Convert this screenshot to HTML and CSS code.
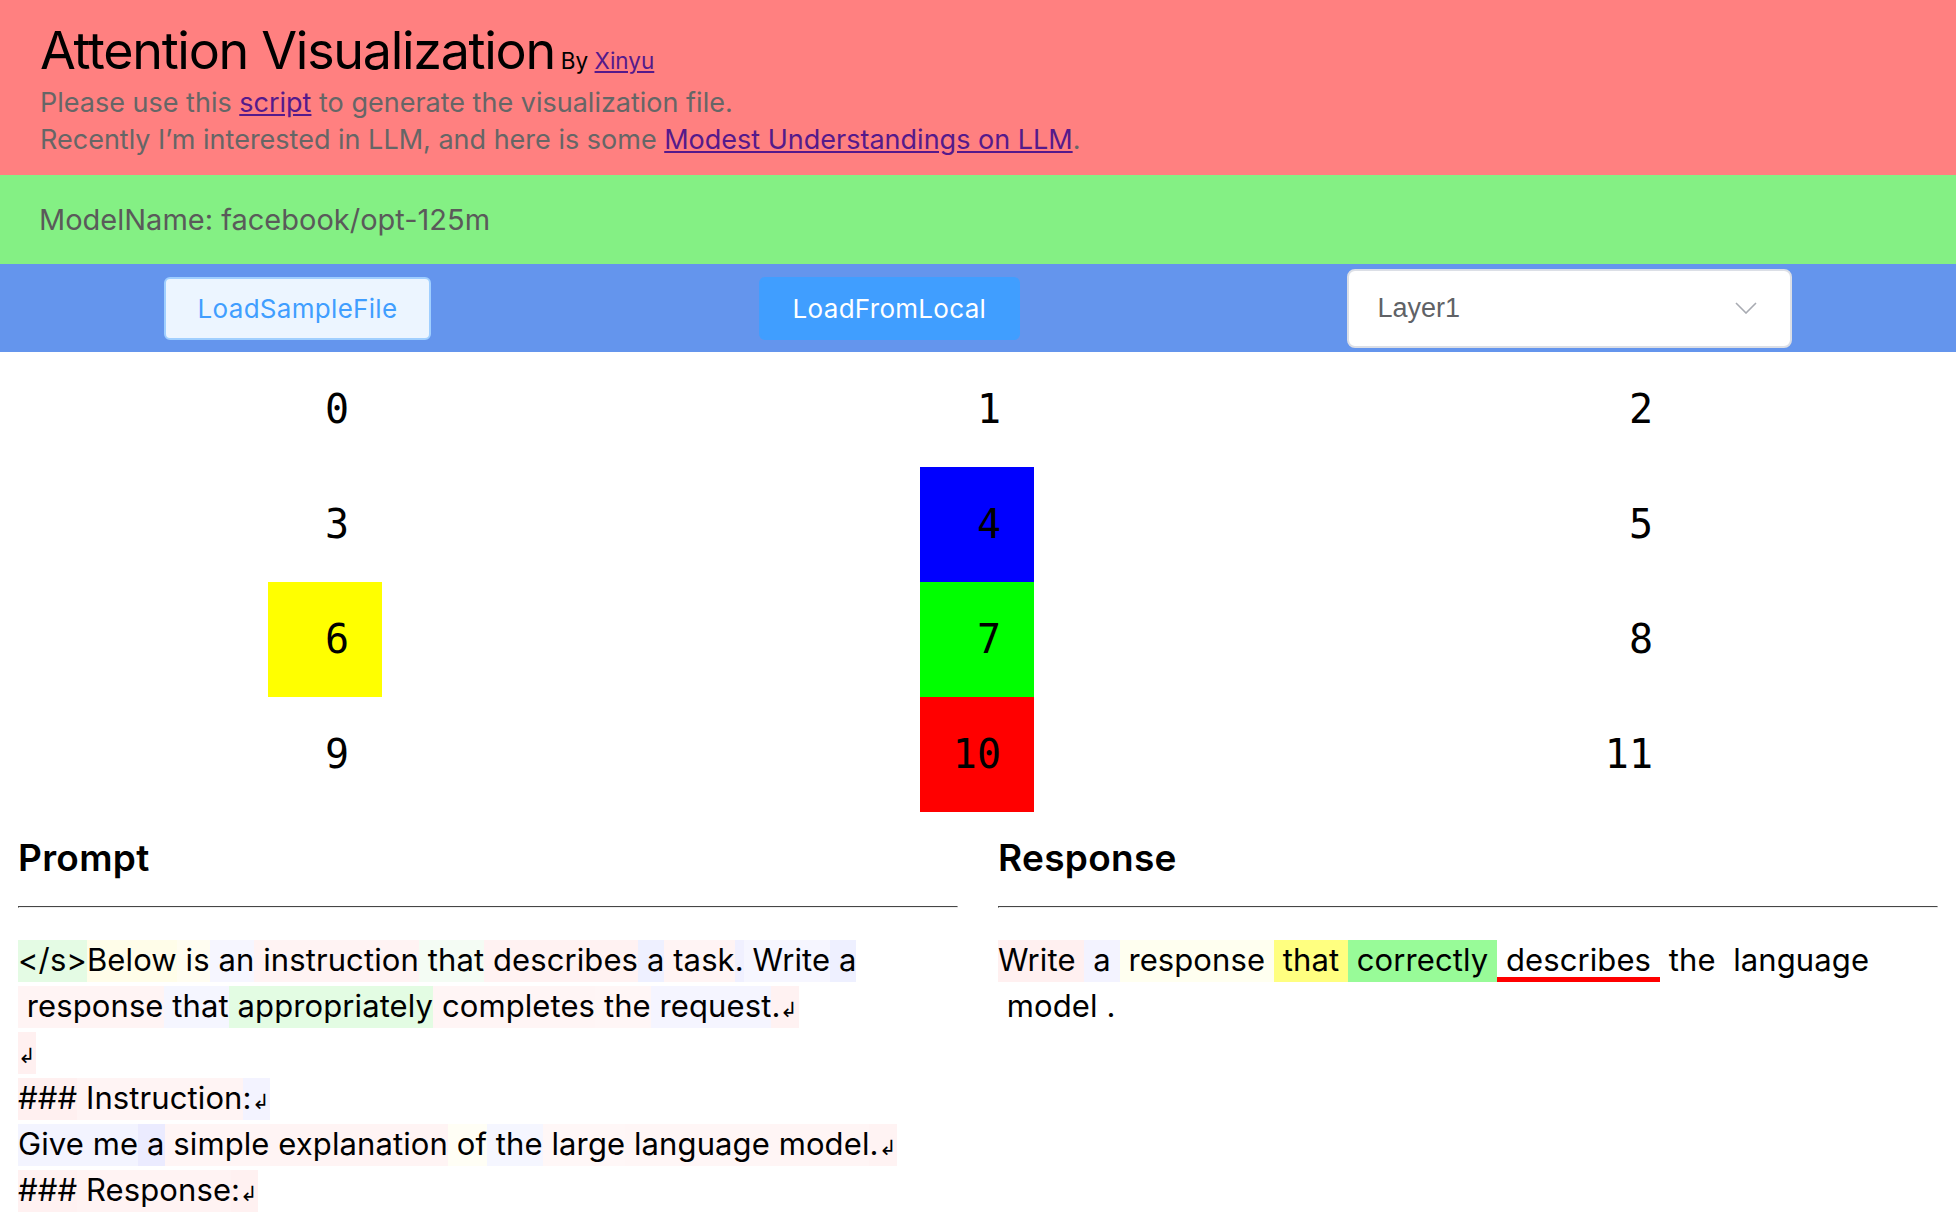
FILE: index.html
```html
<!DOCTYPE html>
<html lang="en">
<head>
<meta charset="utf-8">
<title>Attention Visualization</title>
<link rel="stylesheet" href="styles.css">
</head>
<body>
<header class="top">
  <div class="title-row"><span class="title">Attention Visualization</span><span class="by">By <a href="#">Xinyu</a></span></div>
  <p class="desc desc-first">Please use this <a href="#">script</a> to generate the visualization file.</p>
  <p class="desc">Recently I’m interested in LLM, and here is some <a href="#">Modest Understandings on LLM</a>.</p>
</header>
<div class="model-bar">ModelName: facebook/opt-125m</div>
<div class="tool-bar">
  <button class="btn btn-plain">LoadSampleFile</button>
  <button class="btn btn-primary">LoadFromLocal</button>
  <div class="select">
    <span class="select-text">Layer1</span>
    <svg class="chev" width="22" height="12" viewBox="0 0 22 12"><path d="M1 1 L11 11 L21 1" fill="none" stroke="#a8abb2" stroke-width="1.6"/></svg>
  </div>
</div>
<div class="heads">
  <div class="head-cell"><span class="head">0</span></div>
  <div class="head-cell"><span class="head">1</span></div>
  <div class="head-cell"><span class="head">2</span></div>
  <div class="head-cell"><span class="head">3</span></div>
  <div class="head-cell"><span class="head" style="background:#0000ff">4</span></div>
  <div class="head-cell"><span class="head">5</span></div>
  <div class="head-cell"><span class="head" style="background:#ffff00">6</span></div>
  <div class="head-cell"><span class="head" style="background:#00ff00">7</span></div>
  <div class="head-cell"><span class="head">8</span></div>
  <div class="head-cell"><span class="head">9</span></div>
  <div class="head-cell"><span class="head" style="background:#ff0000">10</span></div>
  <div class="head-cell"><span class="head">11</span></div>
</div>
<main class="texts">
  <section class="col">
    <h2 class="col-title">Prompt</h2>
    <hr class="rule">
    <div class="tokens"><span class="tok" style="background:#e4fbe4">&lt;/s&gt;</span><span class="tok" style="background:#fffde9">Below</span><span class="tok" style="background:#fffdf1"> is</span><span class="tok" style="background:#f6f6ff"> an</span><span class="tok" style="background:#fff3f3"> instruction</span><span class="tok" style="background:#f4fcf4"> that</span><span class="tok" style="background:#fff2f2"> describes</span><span class="tok" style="background:#eef0ff"> a</span><span class="tok" style="background:#fff4f4"> task</span><span class="tok" style="background:#f0f0ff">.</span><span class="tok" style="background:#f6f6ff"> Write</span><span class="tok" style="background:#eef0ff"> a</span><span class="tok" style="background:#fff4f4"> response</span><span class="tok" style="background:#f5f6ff"> that</span><span class="tok" style="background:#e3fce3"> appropriately</span><span class="tok" style="background:#fff5f5"> completes</span><span class="tok" style="background:#fff6f6"> the</span><span class="tok" style="background:#f5f5ff"> request</span><span class="tok" style="background:#fff2f2">.<span class="nl">↲</span></span><br><span class="tok" style="background:#fff0f0"><span class="nl">↲</span></span><br><span class="tok" style="background:#fff0f0">###</span><span class="tok" style="background:#fff4f4"> Instruction</span><span class="tok" style="background:#f3f3ff">:<span class="nl">↲</span></span><br><span class="tok" style="background:#f3f4ff">Give</span><span class="tok" style="background:#f3f4ff"> me</span><span class="tok" style="background:#ebebff"> a</span><span class="tok" style="background:#fff5f5"> simple</span><span class="tok" style="background:#fff4f4"> explanation</span><span class="tok" style="background:#fffef5"> of</span><span class="tok" style="background:#f5f6ff"> the</span><span class="tok" style="background:#fff7f7"> large</span><span class="tok" style="background:#fff6f6"> language</span><span class="tok" style="background:#fff5f5"> model</span><span class="tok" style="background:#fff3f3">.<span class="nl">↲</span></span><br><span class="tok" style="background:#fff1f1">###</span><span class="tok" style="background:#fff3f3"> Response</span><span class="tok" style="background:#fff1f1">:<span class="nl">↲</span></span></div>
  </section>
  <section class="col">
    <h2 class="col-title">Response</h2>
    <hr class="rule">
    <div class="tokens"><span class="tok" style="background:#fff0f0">Write </span><span class="tok" style="background:#f3f3ff"> a </span><span class="tok" style="background:#fffff0"> response </span><span class="tok" style="background:#ffff80"> that </span><span class="tok" style="background:#98fb98"> correctly </span><span class="tok tok-selected"> describes </span><span class="tok"> the </span><span class="tok"> language </span><span class="tok"> model </span><span class="tok">. </span></div>
  </section>
</main>
</body>
</html>
```
FILE: styles.css
```css
html, body {
  margin: 0;
  padding: 0;
  background: #ffffff;
}
body {
  font-family: "Inter", "Noto Sans", sans-serif;
  color: #000;
}
a {
  color: #551a8b;
}

.top {
  background: #ff8080;
  height: 175px;
  box-sizing: border-box;
  padding: 25px 40px 0;
}
.title-row {
  line-height: 1;
  white-space: nowrap;
}
.title {
  font-size: 52px;
  line-height: 52px;
  font-weight: 400;
  letter-spacing: -1.3px;
}
.by {
  font-size: 22.5px;
  line-height: 24px;
  margin-left: 6px;
}
.desc {
  margin: 0;
  font-size: 27px;
  line-height: 37px;
  color: #666666;
}
.desc-first {
  margin-top: 7px;
}

.model-bar {
  background: #84f084;
  height: 89px;
  line-height: 89px;
  padding-left: 39px;
  font-size: 29px;
  color: #5a5a5a;
}

.tool-bar {
  background: #6495ed;
  height: 88px;
  display: flex;
  justify-content: space-around;
  align-items: center;
}
.btn {
  height: 63px;
  padding: 0 32px;
  border-radius: 6px;
  font-family: inherit;
  font-size: 26px;
  letter-spacing: 0.3px;
  box-sizing: border-box;
  cursor: pointer;
}
.btn-plain {
  background: #ecf5ff;
  border: 2px solid #a0cfff;
  color: #409eff;
}
.btn-primary {
  background: #409eff;
  border: 2px solid #409eff;
  color: #ffffff;
}
.select {
  width: 445px;
  height: 79px;
  box-sizing: border-box;
  background: #ffffff;
  border: 2px solid #dcdfe6;
  border-radius: 8px;
  display: flex;
  align-items: center;
  justify-content: space-between;
  padding: 0 33px 0 28px;
}
.select-text {
  font-family: "Liberation Sans", Arial, sans-serif;
  font-size: 27px;
  color: #606266;
}

.heads {
  display: grid;
  grid-template-columns: repeat(3, 1fr);
  grid-auto-rows: 115px;
}
.head-cell {
  display: flex;
  justify-content: center;
}
.head {
  display: block;
  width: 114px;
  height: 115px;
  box-sizing: border-box;
  padding-right: 33px;
  text-align: right;
  line-height: 115px;
  font-family: "DejaVu Sans Mono", monospace;
  font-size: 40px;
  margin-left: -2px;
}

.texts {
  display: grid;
  grid-template-columns: 1fr 1fr;
  column-gap: 40px;
  padding: 0 18px;
}
.col-title {
  margin: 26px 0 0;
  font-size: 37px;
  line-height: 40px;
  font-weight: 600;
  letter-spacing: 0.3px;
}
.rule {
  margin: 28px 0 32px;
  border: 1px inset #eeeeee;
  border-top-color: #9a9a9a;
  border-left-color: #9a9a9a;
}
.tokens {
  font-size: 31px;
  line-height: 37px;
  letter-spacing: 0.1px;
}
.tok {
  display: inline-block;
  vertical-align: top;
  white-space: pre;
  line-height: 35px;
  padding-top: 2px;
  border-bottom: 5px solid transparent;
  margin-bottom: 4px;
}
.tok-selected {
  border-bottom-color: #ff0000;
}
.nl {
  font-size: 21px;
  line-height: 1;
}
```
